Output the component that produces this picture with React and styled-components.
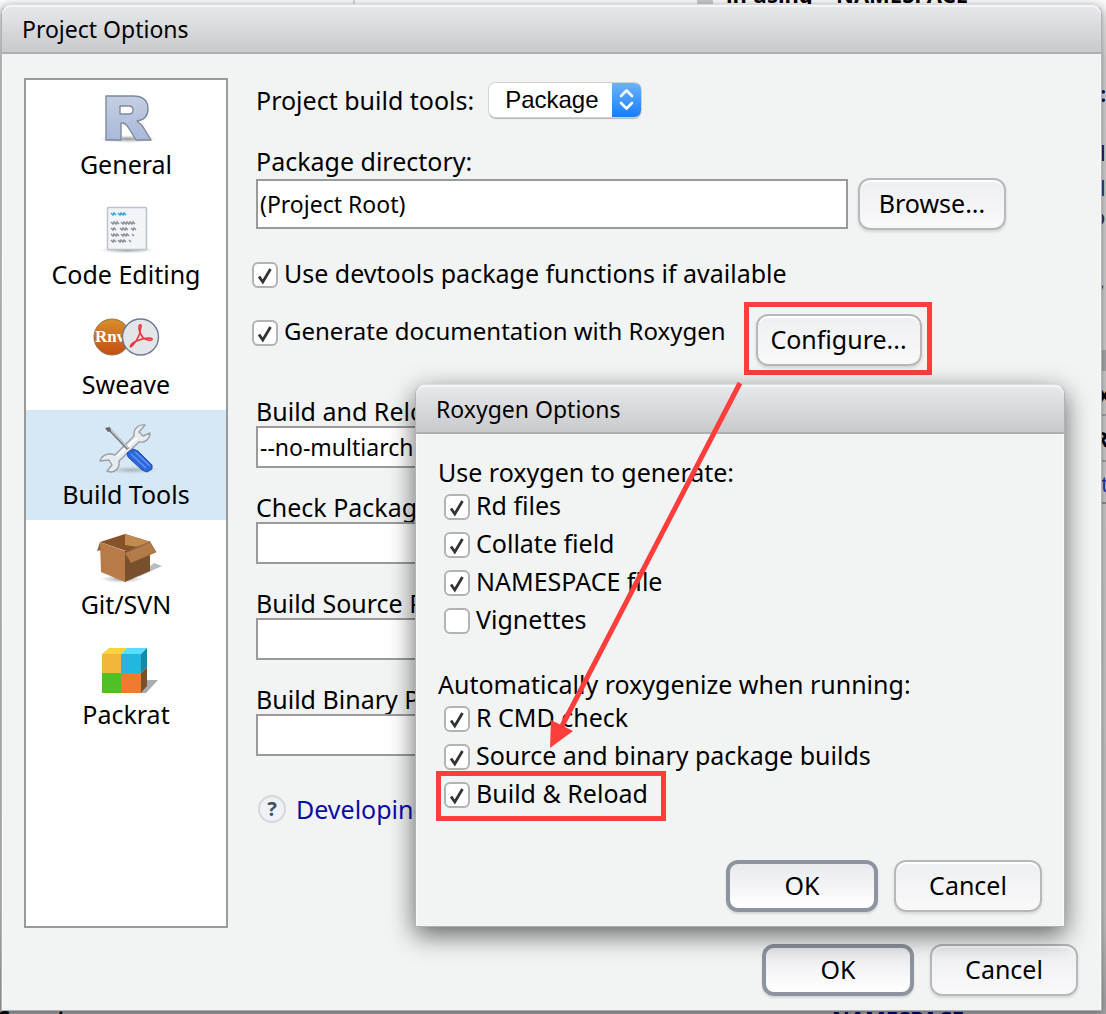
import React from "react";
import styled, { createGlobalStyle, css } from "styled-components";

const ui = `"Noto Sans", "Open Sans", sans-serif`;

const GlobalStyle = createGlobalStyle`
  *, *::before, *::after { box-sizing: border-box; }
  body { margin: 0; background: #c4c5c7; color: #000; font: 25px/32px ${ui}; }
`;

const Desktop = styled.main`
  position: relative;
  min-height: 100vh;
  padding: 4px 4px 3px 1px;
  overflow: hidden;
`;

const Backdrop = styled.div`
  position: absolute;
  inset: 0;
  overflow: hidden;
  background: linear-gradient(#fafafa 0, #f0f0f0 12px, #d6d6d6 60px, #c6c6c7 90%, #a5a4a6 100%);
`;

const BackText = styled.span`
  position: absolute;
  white-space: nowrap;
  left: ${(p) => p.$x}px;
  top: ${(p) => p.$y}px;
  font: ${(p) => (p.$light ? "normal" : "bold")} 22px/28px ${ui};
  color: ${(p) => p.$color || "#000"};
`;

const BackBlock = styled.i`
  position: absolute;
  left: ${(p) => p.$x}px;
  top: ${(p) => p.$y}px;
  width: ${(p) => p.$w}px;
  height: ${(p) => p.$h}px;
  background: ${(p) => p.$color};
`;

const Window = styled.section`
  position: relative;
  display: flex;
  flex-direction: column;
  background: #f2f4f4;
  border: 1px solid #b0b1b5;
  border-top-color: #dcdde0;
  border-radius: 10px 10px 0 0;
  box-shadow: inset 1px 0 #fafafc, inset -1px 0 #fafafc, ${(p) =>
    p.$modal
      ? "0 8px 26px rgba(0,0,0,.6)"
      : "0 2px 8px rgba(0,0,0,.4)"};
`;

const TitleBar = styled.h1`
  margin: 0;
  height: 49px;
  padding: 0 20px;
  border-bottom: 2px solid #aeafb3;
  border-radius: 9px 9px 0 0;
  background: linear-gradient(#e8e9ec, #c9cacd);
  box-shadow: inset 0 2px #f4f5f7;
  font: 23px/49px ${ui};
`;

const Body = styled.div`
  display: flex;
  gap: 28px;
  padding: 24px 24px 16px 22px;
`;

const Sidebar = styled.nav`
  flex: 0 0 204px;
  min-height: 850px;
  background: #fff;
  border: 2px solid #999b9b;
`;

const NavItem = styled.button`
  display: flex;
  flex-direction: column;
  align-items: center;
  gap: 4px;
  width: 100%;
  height: 110px;
  padding: 10px 0 0;
  border: 0;
  background: ${(p) => (p.$active ? "#d6e7f5" : "transparent")};
  font: 25px/32px ${ui};
  color: #000;
  svg { display: block; width: 72px; height: 54px; }
`;

const Form = styled.div`
  flex: 1;
  min-width: 0;
  display: flex;
  flex-direction: column;
`;

const Row = styled.div`
  display: flex;
  align-items: ${(p) => p.$align || "center"};
  gap: ${(p) => p.$gap || 0}px;
  height: ${(p) => p.$h}px;
  padding-bottom: ${(p) => p.$bottom || 0}px;
`;

const CheckRow = styled.div`
  display: flex;
  align-items: flex-start;
  gap: 18px;
  margin-left: -4px;
  padding-top: ${(p) => p.$top || 0}px;
  height: ${(p) => p.$h}px;
  font-size: ${(p) => (p.$compact ? 24 : 25)}px;
  > label { margin-top: 12px; }
`;

const SelectWrap = styled.span`
  position: relative;
  display: inline-flex;
  width: 152px;
  height: 34px;
  border-radius: 7px;
  box-shadow: 0 0 0 1px #d0d1d1, 0 2px 1px #b4b4b4;
  overflow: clip;
  overflow-clip-margin: 3px;
  svg { position: absolute; right: 0; top: 0; pointer-events: none; }
`;

const Select = styled.select`
  appearance: none;
  width: 100%;
  padding: 0 0 0 16px;
  border: 0;
  border-radius: 7px;
  background: #fff;
  color: #000;
  font: 24px/34px "Liberation Sans", Arial, sans-serif;
`;

const Fields = styled.div`
  width: 100%;
  max-width: 750px;
  padding-top: 21px;
`;

const Field = styled.div`
  display: flex;
  flex-direction: column;
  height: 96px;
`;

const FieldLabel = styled.label`
  line-height: 30px;
  white-space: nowrap;
`;

const TextInput = styled.input`
  flex: ${(p) => (p.$w ? `0 1 ${p.$w}px` : "none")};
  min-width: 0;
  width: 100%;
  height: ${(p) => p.$h || 42}px;
  padding: 0 2px;
  border: 2px solid #999b9b;
  background: #fff;
  color: #000;
  font: 23px/32px ${ui};
`;

const Button = styled.button`
  width: ${(p) => p.$w || 148}px;
  height: 52px;
  padding: 0 0 3px;
  border-radius: 12px;
  color: #000;
  font: 25px/32px ${ui};
  ${(p) =>
    p.$primary
      ? css`
          border: 4px solid #8c949f;
          background: linear-gradient(#e9eaee, #fff);
          box-shadow: 0 2px 2px rgba(0, 0, 0, 0.12);
        `
      : css`
          border: 2px solid #b6b8bb;
          background: linear-gradient(#eeeff2, #f9f9fa);
          box-shadow: inset 0 2px #fff, 0 2px 3px rgba(0, 0, 0, 0.12);
        `}
`;

const Actions = styled.footer`
  display: flex;
  justify-content: flex-end;
  gap: 16px;
  padding: 0 ${(p) => p.$right}px ${(p) => p.$bottom}px;
`;

const Highlight = styled.span`
  display: inline-flex;
  padding: 7px 5px 4px 7px;
  border: 5px solid #ff3e3c;
`;

const RowHighlight = styled.span`
  position: absolute;
  inset: -5px auto auto -8px;
  width: 230px;
  height: 50px;
  border: 5px solid #ff3e3c;
  pointer-events: none;
`;

const CheckLabel = styled.label`
  position: relative;
  display: inline-flex;
  align-items: center;
  gap: 6px;
  height: 38px;
  white-space: nowrap;
`;

const BoxWrap = styled.span`
  position: relative;
  display: inline-flex;
  input { appearance: none; width: 26px; height: 26px; margin: 0; border: 2px solid #b2b3b3; border-radius: 6px; background: #fff; }
  svg { position: absolute; left: 0; top: 0; visibility: hidden; pointer-events: none; }
  input:checked + svg { visibility: visible; }
`;

const CheckText = styled.span`
  padding-bottom: 5px;
`;

const Checks = styled.fieldset`
  display: flex;
  flex-direction: column;
  align-items: flex-start;
  margin: 0;
  padding: 0 0 0 6px;
  border: 0;
  min-width: 0;
`;

const Legend = styled.legend`
  margin-left: -6px;
  padding: 0;
  line-height: 31px;
`;

const ModalBody = styled.div`
  display: flex;
  flex-direction: column;
  gap: 29px;
  padding: 23px 22px 46px;
`;

const ModalPlace = styled.div`
  position: absolute;
  left: 413px;
  top: 379px;
  width: 650px;
`;

const Arrow = styled.svg`
  position: absolute;
  left: 539px;
  top: 375px;
  pointer-events: none;
`;

const HelpRow = styled.div`
  display: flex;
  align-items: center;
  gap: 8px;
  padding-top: 13px;
  white-space: nowrap;
  a { color: #0c0ca6; text-decoration: none; }
`;

function Check({ children, checked, highlight }) {
  return (
    <CheckLabel>
      <BoxWrap>
        <input type="checkbox" defaultChecked={checked} />
        <svg width="26" height="26" viewBox="0 0 26 26" aria-hidden="true">
          <path d="M7 14.5L10.8 20L18.5 7" fill="none" stroke="#333" strokeWidth="2.8" />
        </svg>
      </BoxWrap>
      <CheckText>{children}</CheckText>
      {highlight && <RowHighlight />}
    </CheckLabel>
  );
}

const GeneralIcon = () => (
  <svg viewBox="0 0 72 54" aria-hidden="true">
    <defs>
      <linearGradient id="rFill" x1="0" y1="0" x2="0" y2="1"><stop offset="0" stopColor="#c5cfe2" /><stop offset="1" stopColor="#a9b8da" /></linearGradient>
      <radialGradient id="shade"><stop offset="0" stopColor="#555" stopOpacity=".65" /><stop offset="1" stopColor="#999" stopOpacity="0" /></radialGradient>
    </defs>
    <ellipse cx="38" cy="49" rx="29" ry="4" fill="url(#shade)" />
    <path fillRule="evenodd" fill="url(#rFill)" stroke="#7e8a9c" strokeWidth="1.4" strokeLinejoin="round" d="M16 6H43C53 6 58 11 58 19C58 26 54 30 47 31C50 33 53 36 55 40L61 50H46L38 37C36 34 35 33 32 33H31V50H16ZM30 16V24H39C42 24 43 22 43 20C43 17 42 16 39 16Z" />
  </svg>
);

const CodeIcon = () => (
  <svg viewBox="0 0 72 54" aria-hidden="true">
    <ellipse cx="37" cy="50" rx="28" ry="3.5" fill="url(#shade)" />
    <rect x="17.5" y="7.5" width="39" height="42" rx="1" fill="#f2f4f7" stroke="#bcc1cb" strokeWidth="1.5" />
    <g fill="none" strokeWidth="1.4">
      <path stroke="#27a6dc" d="M21 13l2 2 1-2 2 2M28 13l2 2 1-2 2 2 1-2 2 2" />
      <path stroke="#898c91" d="M21 22l2 2 1-2 2 2 1-2 2 2M31 22l2 2 1-2 2 2 1-2 2 2 1-2 2 2 1-2 2 2M21 28l2 2 1-2 2 2M30 28l2 2 1-2 2 2 1-2 2 2M41 28l2 2 1-2 2 2M21 34l2 2 1-2 2 2 1-2 2 2M31 34l2 2 1-2 2 2 1-2 2 2M42 34l2 2M21 40l2 2 1-2 2 2M28 40l2 2 1-2 2 2 1-2 2 2M39 40l2 2" />
    </g>
  </svg>
);

const SweaveIcon = () => (
  <svg viewBox="0 0 72 54" aria-hidden="true">
    <defs><linearGradient id="orange" x1="0" y1="0" x2="0" y2="1"><stop offset="0" stopColor="#d5902c" /><stop offset="1" stopColor="#c44d12" /></linearGradient></defs>
    <circle cx="22" cy="27" r="18" fill="url(#orange)" stroke="#94724d" />
    <text x="5" y="32" fill="#fff" fontFamily="Liberation Serif, serif" fontWeight="bold" fontSize="17">Rnw</text>
    <circle cx="50.5" cy="27" r="18" fill="#e3e5e9" stroke="#6b7b90" strokeWidth="1.4" />
    <path fill="none" stroke="#e9383f" strokeWidth="1.6" strokeLinejoin="round" d="M51 15C48 14 49 20 50 23C48 28 45 33 42 36C40 38 39 36 43 33C47 30 55 28 60 28C64 29 62 31 58 30C54 29 51 26 50 22C50 18 52 16 51 15" />
  </svg>
);

const ToolsIcon = () => (
  <svg viewBox="0 0 72 54" aria-hidden="true">
    <ellipse cx="42" cy="50" rx="27" ry="4" fill="url(#shade)" opacity=".6" />
    <path d="M55 5C48 4 43 9 44 16L25 35C19 33 12 34 10 41L19 40L22 45L17 51C24 54 30 49 29 41L49 22C55 23 60 19 60 13L53 16L49 12Z" fill="#e9ecef" stroke="#999fa6" strokeWidth="1.4" strokeLinejoin="round" />
    <path d="M27 36L47 18" stroke="#fff" strokeWidth="2" />
    <path d="M19 9L38 29" stroke="#777b80" strokeWidth="3" />
    <path d="M20 9L38 28" stroke="#c8ccd0" strokeWidth="1.2" />
    <path d="M15 8L20 7L21 11L18 12Z" fill="#666a6d" />
    <path d="M37 33L43 29L48 31L62 45L62 49L57 52L52 50L38 37Z" fill="#2d68d8" stroke="#1c4fb9" />
    <path d="M41 34L56 48M45 32L60 46" stroke="#6798f5" strokeWidth="1.3" />
  </svg>
);

const BoxIcon = () => (
  <svg viewBox="0 0 72 54" aria-hidden="true">
    <path d="M54 41L64 33L72 36L48 47Z" fill="#babdc0" />
    <ellipse cx="32" cy="49" rx="22" ry="4" fill="url(#shade)" />
    <path d="M10 12L35 4L61 12L36 21Z" fill="#855229" />
    <path d="M35 4L61 12L48 17L35 15Z" fill="#c18b50" />
    <path d="M10 12L35 21V52L11 42Z" fill="#b87a46" />
    <path d="M35 21L60 12V41L35 52Z" fill="#79502e" />
    <path d="M10 12L7 21L11 20Z" fill="#95613b" />
    <path d="M35 23L60 12L66 22L41 33Z" fill="#b37b48" stroke="#97633a" strokeWidth=".7" />
  </svg>
);

const PackratIcon = () => (
  <svg viewBox="0 0 72 54" aria-hidden="true">
    <path d="M56 40H68L56 53H48Z" fill="#a9adb1" />
    <path d="M12 14L19 8H37L31 14Z" fill="#ffd23d" /><path d="M31 14L37 8H57L51 14Z" fill="#55deff" />
    <path d="M12 14H31V33H12Z" fill="#f1b63b" /><path d="M31 14H51V33H31Z" fill="#21b7df" />
    <path d="M12 33H31V53H12Z" fill="#4fc025" /><path d="M31 33H51V53H31Z" fill="#ef7b31" />
    <path d="M51 14L57 8V27L51 33Z" fill="#1689a8" /><path d="M51 33L57 27V46L51 53Z" fill="#78502b" />
  </svg>
);

const sections = [
  ["General", GeneralIcon],
  ["Code Editing", CodeIcon],
  ["Sweave", SweaveIcon],
  ["Build Tools", ToolsIcon],
  ["Git/SVN", BoxIcon],
  ["Packrat", PackratIcon],
];

const options = [
  ["Build and Reload", "--no-multiarch"],
  ["Check Package", ""],
  ["Build Source Package", ""],
  ["Build Binary Package", ""],
];

export default function App() {
  return (
    <>
      <GlobalStyle />
      <Desktop>
        <Backdrop aria-hidden="true">
          <BackBlock $x={353} $y={0} $w={2} $h={6} $color="#d5d5d7" />
          <BackBlock $x={697} $y={0} $w={16} $h={4} $color="#c9c9cd" />
          <BackText $x={726} $y={-20}>in using</BackText>
          <BackText $x={836} $y={-20}>NAMESPACE</BackText>
          <BackText $x={1100} $y={79} $color="#10105e">:</BackText>
          <BackText $x={1100} $y={138} $light $color="#10105e">l</BackText>
          <BackText $x={1100} $y={173} $light $color="#103c80">lg</BackText>
          <BackText $x={1092} $y={202} $light $color="#203050">o</BackText>
          <BackText $x={1099} $y={265} $light $color="#203050">,</BackText>
          <BackBlock $x={1102} $y={350} $w={4} $h={21} $color="#a9aaad" />
          <BackBlock $x={1102} $y={414} $w={4} $h={2} $color="#a2a3a5" />
          <BackBlock $x={1102} $y={460} $w={4} $h={2} $color="#a2a3a5" />
          <BackBlock $x={1102} $y={502} $w={4} $h={2} $color="#8f9092" />
          <BackText $x={1098} $y={379}>x</BackText>
          <BackText $x={1094} $y={424}>R</BackText>
          <BackText $x={1101} $y={469} $light $color="#2a35a8">t</BackText>
          <BackText $x={-2} $y={1003}>Scrustzoor</BackText>
          <BackText $x={832} $y={1004} $color="#00006e">NAMESPACE</BackText>
        </Backdrop>
        <Window>
          <TitleBar>Project Options</TitleBar>
          <Body>
            <Sidebar>
              {sections.map(([name, Icon]) => (
                <NavItem key={name} $active={name === "Build Tools"}>
                  <Icon />
                  {name}
                </NavItem>
              ))}
            </Sidebar>
            <Form>
              <Row $h={44} $gap={15}>
                <FieldLabel htmlFor="tools">Project build tools:</FieldLabel>
                <SelectWrap>
                  <Select id="tools"><option>Package</option></Select>
                  <svg width="29" height="34" viewBox="0 0 29 34" aria-hidden="true">
                    <defs><linearGradient id="blue" x1="0" y1="0" x2="0" y2="1"><stop offset="0" stopColor="#6cb3fa" /><stop offset="1" stopColor="#157efb" /></linearGradient></defs>
                    <path d="M0 0H22Q29 0 29 7V27Q29 34 22 34H0Z" fill="url(#blue)" />
                    <path d="M9 13L14.5 7.5L20 13M9 20L14.5 25.5L20 20" fill="none" stroke="#fff" strokeWidth="2.6" strokeLinecap="round" strokeLinejoin="round" />
                  </svg>
                </SelectWrap>
              </Row>
              <Row $h={56} $bottom={2} $align="flex-end"><FieldLabel htmlFor="dir">Package directory:</FieldLabel></Row>
              <Row $h={52} $gap={10}>
                <TextInput id="dir" $w={592} $h={50} defaultValue="(Project Root)" />
                <Button>Browse...</Button>
              </Row>
              <CheckRow $h={72} $top={14}><Check checked>Use devtools package functions if available</Check></CheckRow>
              <CheckRow $h={73} $compact>
                <Check checked>Generate documentation with Roxygen</Check>
                <Highlight><Button $w={166}>Configure...</Button></Highlight>
              </CheckRow>
              <Fields>
                {options.map(([name, value]) => (
                  <Field key={name}>
                    <FieldLabel htmlFor={name}>{name}</FieldLabel>
                    <TextInput id={name} defaultValue={value} />
                  </Field>
                ))}
              </Fields>
              <HelpRow>
                <svg width="32" height="32" viewBox="0 0 32 32" aria-hidden="true">
                  <circle cx="16" cy="16" r="13" fill="#eef1f5" stroke="#d3d8de" strokeWidth="2" />
                  <text x="16" y="23" textAnchor="middle" fontFamily="Noto Sans, sans-serif" fontWeight="bold" fontSize="20" fill="#3d5062">?</text>
                </svg>
                <a href="#packages">Developing Packages</a>
              </HelpRow>
            </Form>
          </Body>
          <Actions $right={23} $bottom={14}>
            <Button $primary $w={152}>OK</Button>
            <Button>Cancel</Button>
          </Actions>
          <ModalPlace>
            <Window $modal role="dialog">
              <TitleBar as="h2">Roxygen Options</TitleBar>
              <ModalBody>
                <Checks>
                  <Legend>Use roxygen to generate:</Legend>
                  <Check checked>Rd files</Check>
                  <Check checked>Collate field</Check>
                  <Check checked>NAMESPACE file</Check>
                  <Check>Vignettes</Check>
                </Checks>
                <Checks>
                  <Legend>Automatically roxygenize when running:</Legend>
                  <Check checked>R CMD check</Check>
                  <Check checked>Source and binary package builds</Check>
                  <Check checked highlight>Build &amp; Reload</Check>
                </Checks>
              </ModalBody>
              <Actions $right={22} $bottom={14}>
                <Button $primary $w={152}>OK</Button>
                <Button>Cancel</Button>
              </Actions>
            </Window>
          </ModalPlace>
          <Arrow width="210" height="380" viewBox="0 0 210 380" aria-hidden="true">
            <path d="M199 3L21 346" stroke="#ff3e3c" strokeWidth="5" />
            <path d="M9 368L10 340L32 351Z" fill="#ff3e3c" />
          </Arrow>
        </Window>
      </Desktop>
    </>
  );
}
